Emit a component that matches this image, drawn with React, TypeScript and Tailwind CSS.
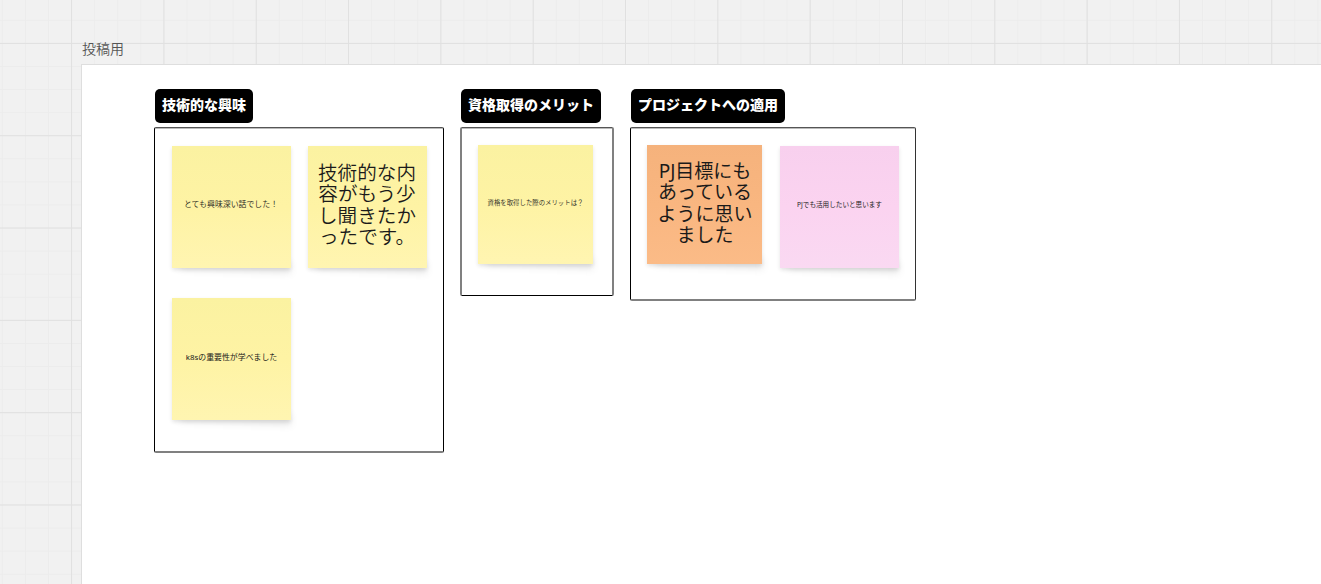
import clsx from 'clsx';

type NoteColor = 'yellow' | 'orange' | 'pink';

interface Note {
  text: string;
  color: NoteColor;
  className: string;
}

interface Group {
  title: string;
  labelClass: string;
  boxClass: string;
  notes: Note[];
}

const noteColors: Record<NoteColor, string> = {
  yellow: 'from-[#fbf2a1] via-[#fef3a4] to-[#fff5b1]',
  orange: 'from-[#f5b27c] via-[#f9b680] to-[#fbbb87]',
  pink: 'from-[#f8d0ee] via-[#fbd3f0] to-[#fad9f2]',
};

const groups: Group[] = [
  {
    title: '技術的な興味',
    labelClass: 'w-[98px]',
    boxClass: 'w-[290px] h-[326px] border-b-2 border-b-[#808080] pt-[18px] pl-[17px]',
    notes: [
      { text: 'とても興味深い話でした！', color: 'yellow', className: 'w-[119px] h-[122px] text-[7.9px] pt-[55px] pr-px leading-none font-[350]' },
      { text: '技術的な内\n容がもう少\nし聞きたか\nったです。', color: 'yellow', className: 'w-[119px] h-[122px] text-[19.6px] pt-[16px] pr-px leading-[21.3px] font-[350]' },
      { text: 'k8sの重要性が学べました', color: 'yellow', className: 'w-[119px] h-[122px] text-[7.9px] pt-[56px] leading-none font-normal' },
    ],
  },
  {
    title: '資格取得のメリット',
    labelClass: 'w-[140px]',
    boxClass: 'w-[154px] h-[169px] border-x-2 border-x-[#808080] pt-[17px] pl-[16px]',
    notes: [
      { text: '資格を取得した際のメリットは？', color: 'yellow', className: 'w-[115px] h-[119px] text-[6.4px] pt-[55px] leading-none font-[350]' },
    ],
  },
  {
    title: 'プロジェクトへの適用',
    labelClass: 'w-[154px]',
    boxClass: 'w-[286px] h-[174px] border-b-2 border-b-[#808080] border-r-[#333] pt-[17px] pl-[16px]',
    notes: [
      { text: 'PJ目標にも\nあっている\nように思い\nました', color: 'orange', className: 'mr-px w-[115px] h-[119px] text-[19px] pt-[16px] pl-px leading-[21.4px] font-normal' },
      { text: 'PJでも活用したいと思います', color: 'pink', className: 'mt-px w-[119px] h-[122px] text-[6.6px] pt-[56px] leading-none font-normal' },
    ],
  },
];

function BoardGrid() {
  return (
    <svg className="absolute inset-0 h-full w-full" aria-hidden="true">
      <defs>
        <pattern id="minor" x="71.1" y="42.9" width="23.08" height="23.08" patternUnits="userSpaceOnUse">
          <path d="M0.5 0V23.08M0 0.5H23.08" stroke="#ececec" fill="none" />
        </pattern>
        <pattern id="major" x="71.1" y="42.9" width="92.32" height="92.32" patternUnits="userSpaceOnUse">
          <path d="M0.5 0V92.32M0 0.5H92.32" stroke="#e0e0e0" fill="none" />
        </pattern>
      </defs>
      <rect width="100%" height="100%" fill="url(#minor)" />
      <rect width="100%" height="100%" fill="url(#major)" />
    </svg>
  );
}

function StickyNote({ note }: { note: Note }) {
  return (
    <div className="relative">
      {/* Lifted corner shadow */}
      <div className="absolute right-0 -bottom-0.5 left-2 h-3 origin-left rotate-2 bg-black/8 blur-[3px]" />
      <div
        className={clsx(
          'relative bg-linear-to-b text-center whitespace-pre text-[#1a1a1a] shadow-[0_2px_4px_rgba(0,0,0,0.11)]',
          noteColors[note.color],
          note.className
        )}
      >
        {note.text}
      </div>
    </div>
  );
}

export default function App() {
  return (
    <main className="relative h-[584px] w-[1321px] overflow-hidden bg-[#f1f1f1] font-['Noto_Sans','Noto_Sans_CJK_JP',sans-serif]">
      <BoardGrid />

      <div className="relative flex h-full flex-col pt-[39px] pl-[81px]">
        <div className="h-[25px] pl-px text-sm leading-5 font-[350] text-[#555]">投稿用</div>

        {/* Frame */}
        <section className="flex flex-1 items-start border-t border-l border-[#dedede] bg-white pt-6 pl-[72px]">
          {groups.map((group) => (
            <div key={group.title} className="mr-4 flex shrink-0 flex-col">
              <h2
                className={clsx(
                  'ml-px h-[34px] rounded-[5px] bg-black text-center text-sm leading-[31px] font-black whitespace-nowrap text-white',
                  group.labelClass
                )}
              >
                {group.title}
              </h2>
              <div
                className={clsx(
                  'mt-1 flex flex-wrap content-start items-start gap-x-[17px] gap-y-[30px] rounded-[2px] border border-black border-t-[#555] shadow-[inset_0_1px_0_#bbb]',
                  group.boxClass
                )}
              >
                {group.notes.map((note) => (
                  <StickyNote key={note.text} note={note} />
                ))}
              </div>
            </div>
          ))}
        </section>
      </div>
    </main>
  );
}
